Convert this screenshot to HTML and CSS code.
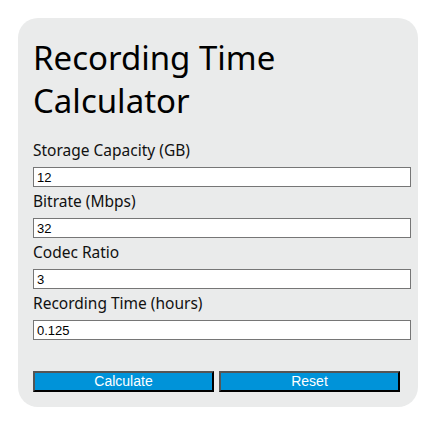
FILE: index.html
```html
<!DOCTYPE html>
<html>
<head>
<meta charset="utf-8">
<link rel="stylesheet" href="styles.css">
</head>
<body>
<div class="card">
  <h1 class="title">Recording Time Calculator</h1>
  <form class="form">
    <label class="label" for="storage">Storage Capacity (GB)</label>
    <input class="field" id="storage" type="text" value="12">
    <label class="label" for="bitrate">Bitrate (Mbps)</label>
    <input class="field" id="bitrate" type="text" value="32">
    <label class="label" for="codec">Codec Ratio</label>
    <input class="field" id="codec" type="text" value="3">
    <label class="label" for="time">Recording Time (hours)</label>
    <input class="field" id="time" type="text" value="0.125">
    <div class="actions">
      <button class="btn" type="button">Calculate</button>
      <button class="btn" type="reset">Reset</button>
    </div>
  </form>
</div>
</body>
</html>
```
FILE: styles.css
```css
html, body {
  margin: 0;
  background: #ffffff;
}
body {
  padding: 18px;
  font-family: "Noto Sans", "Open Sans", sans-serif;
  color: #111;
}
.card {
  width: 400px;
  box-sizing: border-box;
  background: #eaebeb;
  border-radius: 20px;
  padding: 18px 15px 15px;
  height: 389px;
}
.title {
  margin: 0 0 17px;
  font-weight: 400;
  font-size: 33px;
  line-height: 43px;
  color: #000;
}
.form {
  display: flex;
  flex-direction: column;
}
.label {
  font-size: 15.5px;
  line-height: 22px;
  margin-bottom: 6px;
  color: #111;
}
.field {
  width: 100%;
  box-sizing: content-box;
  padding: 0 3px;
  height: 18px;
  border: 1px solid #767676;
  font-family: "Liberation Sans", Arial, sans-serif;
  font-size: 13px;
  color: #000;
  background: #fff;
  margin: 0 0 3px;
  outline: none;
}
.actions {
  display: flex;
  gap: 5px;
  margin-top: 28px;
}
.btn {
  width: 181px;
  height: 21px;
  padding: 0;
  background: #0093d9;
  color: #fff;
  font-family: "Liberation Sans", Arial, sans-serif;
  font-size: 14px;
  line-height: 17px;
  border: 2px solid;
  border-color: #555 #000 #000 #555;
}
```
